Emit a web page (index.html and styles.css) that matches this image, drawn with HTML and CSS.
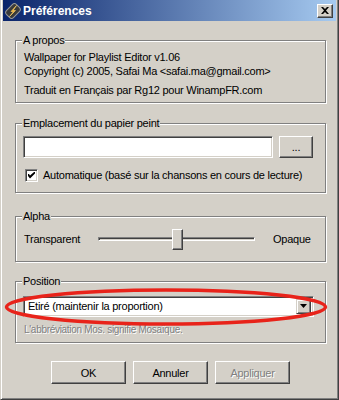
FILE: index.html
```html
<!DOCTYPE html>
<html lang="fr">
<head>
  <meta charset="UTF-8" />
  <title>Préférences</title>
  <link rel="stylesheet" href="styles.css">
</head>
<body>
  <div class="window">
    <div class="titlebar">
      <svg class="app-icon" width="16" height="16" viewBox="0 0 16 16">
        <rect x="3" y="1" width="10" height="14" rx="3" transform="rotate(45 8 8)" fill="#3a3a3a" stroke="#9a9a9a" stroke-width="1"/>
        <path d="M11.5 2.5 L6 8.5 L8.5 8.5 L4.5 13.5 L10.5 7.5 L8 7.5 Z" fill="#f7a21b" stroke="#ffd870" stroke-width="0.6"/>
      </svg>
      <span class="title">Préférences</span>
      <button class="close-btn">
        <svg width="8" height="7" viewBox="0 0 8 7"><path d="M0 0h2l2 2 2-2h2L5 3.5 8 7H6L4 5 2 7H0l3-3.5z" fill="#000"/></svg>
      </button>
    </div>

    <div class="content">
      <fieldset class="group group-about">
        <legend>A propos</legend>
        <p>Wallpaper for Playlist Editor v1.06<br>Copyright (c) 2005, Safai Ma &lt;safai.ma@gmail.com&gt;</p>
        <p class="credit">Traduit en Français par Rg12 pour WinampFR.com</p>
      </fieldset>

      <fieldset class="group group-path">
        <legend>Emplacement du papier peint</legend>
        <div class="path-row">
          <input type="text" class="field" value="">
          <button class="btn btn-browse">...</button>
        </div>
        <label class="check-row">
          <span class="checkbox">
            <svg width="7" height="7" viewBox="0 0 7 7"><path d="M0 2h1l1 1.5L6 0h1v1.5L2 6.5 0 4z" fill="#000"/></svg>
          </span>
          Automatique (basé sur la chansons en cours de lecture)
        </label>
      </fieldset>

      <fieldset class="group group-alpha">
        <legend>Alpha</legend>
        <div class="slider-row">
          <span class="slider-label">Transparent</span>
          <div class="slider">
            <div class="track"></div>
            <div class="thumb"></div>
          </div>
          <span class="slider-end">Opaque</span>
        </div>
      </fieldset>

      <fieldset class="group group-position">
        <legend>Position</legend>
        <div class="select">
          <span class="select-text">Etiré (maintenir la proportion)</span>
          <span class="select-arrow">
            <svg width="7" height="4" viewBox="0 0 7 4"><path d="M0 0h7L3.5 4z" fill="#000"/></svg>
          </span>
        </div>
        <p class="hint">L'abbréviation Mos. signifie Mosaïque.</p>
      </fieldset>

      <div class="dialog-buttons">
        <button class="btn">OK</button>
        <button class="btn">Annuler</button>
        <button class="btn btn-disabled">Appliquer</button>
      </div>
    </div>

    <!-- annotation drawn over the screenshot -->
    <svg class="highlight" width="339" height="50" viewBox="0 0 339 50">
      <ellipse cx="165" cy="27" rx="159.5" ry="17" fill="none" stroke="#e8231a" stroke-width="3.5"/>
    </svg>
  </div>
</body>
</html>
```

FILE: styles.css
```css
* {
  margin: 0;
  padding: 0;
  box-sizing: border-box;
}

body {
  background-color: #d4d0c8;
  font-family: "Liberation Sans", Arial, sans-serif;
  font-size: 11px;
  letter-spacing: -0.25px;
  color: #000;
}

.window {
  position: relative;
  width: 339px;
  height: 400px;
  background-color: #d4d0c8;
  border-left: 1px solid #d4d0c8;
  border-right: 1px solid #404040;
  border-bottom: 1px solid #404040;
  box-shadow: inset 1px 0 0 #fff, inset -1px -1px 0 #808080;
  padding: 0 2px 2px 2px;
}

.titlebar {
  display: flex;
  align-items: center;
  height: 21px;
  padding: 0 3px 0 2px;
  background: linear-gradient(to right, #0a246a, #a6caf0);
}

.app-icon {
  flex-shrink: 0;
}

.title {
  margin-left: 2px;
  flex: 1;
  color: #fff;
  font-weight: bold;
  font-size: 12px;
  letter-spacing: 0;
}

.close-btn {
  width: 16px;
  height: 14px;
  display: flex;
  align-items: center;
  justify-content: center;
  background-color: #d4d0c8;
  border: 1px solid;
  border-color: #fff #404040 #404040 #fff;
  box-shadow: inset -1px -1px 0 #808080;
}

.content {
  padding: 13px 10px 0 12px;
}

.group {
  border: 1px solid #808080;
  box-shadow: 1px 1px 0 #fff, inset 1px 1px 0 #fff;
  padding: 0 12px 0 7px;
  min-width: 0;
}

.group legend {
  padding: 0 1px;
  margin-left: -1px;
  line-height: 13px;
  background-color: #d4d0c8;
}

.group p {
  padding-left: 1px;
  line-height: 13.5px;
}

.group-about {
  padding-top: 4px;
  padding-bottom: 4px;
}

.group-about .credit {
  margin-top: 6px;
}

.group-path {
  margin-top: 14px;
  padding-top: 6px;
  padding-bottom: 10px;
}

.path-row {
  display: flex;
  gap: 6px;
}

.field {
  flex: 1;
  height: 22px;
  background-color: #fff;
  border: 1px solid;
  border-color: #808080 #fff #fff #808080;
  box-shadow: inset 1px 1px 0 #404040, inset -1px -1px 0 #d4d0c8;
  font: inherit;
  outline: none;
}

.btn {
  height: 23px;
  width: 75px;
  background-color: #d4d0c8;
  border: 1px solid;
  border-color: #fff #404040 #404040 #fff;
  box-shadow: inset -1px -1px 0 #808080, inset 1px 1px 0 #d4d0c8;
  font: inherit;
  letter-spacing: inherit;
  color: #000;
}

.btn-browse {
  width: 34px;
  height: 22px;
}

.btn-disabled {
  color: #808080;
  text-shadow: 1px 1px 0 #fff;
}

.check-row {
  display: flex;
  align-items: center;
  gap: 5px;
  margin-top: 11px;
  padding-left: 2px;
  white-space: nowrap;
}

.checkbox {
  width: 13px;
  height: 13px;
  flex-shrink: 0;
  display: flex;
  align-items: center;
  justify-content: center;
  background-color: #fff;
  border: 1px solid;
  border-color: #808080 #fff #fff #808080;
  box-shadow: inset 1px 1px 0 #404040, inset -1px -1px 0 #d4d0c8;
}

.group-alpha {
  margin-top: 17px;
  padding-top: 6px;
  padding-bottom: 11px;
}

.slider-row {
  display: flex;
  align-items: center;
  height: 21px;
}

.slider-label {
  width: 75px;
  padding-left: 1px;
}

.slider {
  position: relative;
  width: 157px;
  height: 21px;
  display: flex;
  align-items: center;
}

.track {
  width: 100%;
  height: 4px;
  border: 1px solid;
  border-color: #808080 #fff #fff #808080;
  box-shadow: inset 1px 1px 0 #404040;
}

.thumb {
  position: absolute;
  left: 74px;
  top: 0;
  width: 11px;
  height: 21px;
  background-color: #d4d0c8;
  border: 1px solid;
  border-color: #fff #404040 #404040 #fff;
  box-shadow: inset -1px -1px 0 #808080;
}

.slider-end {
  margin-left: 18px;
}

.group-position {
  margin-top: 13px;
  padding-top: 8px;
  padding-bottom: 6px;
  padding-right: 11px;
}

.select {
  display: flex;
  align-items: center;
  height: 21px;
  background-color: #fff;
  border: 1px solid;
  border-color: #808080 #fff #fff #808080;
  box-shadow: inset 1px 1px 0 #404040, inset -1px -1px 0 #d4d0c8;
  padding: 2px;
}

.select-text {
  flex: 1;
  padding-left: 2px;
}

.select-arrow {
  width: 15px;
  height: 15px;
  display: flex;
  align-items: center;
  justify-content: center;
  background-color: #d4d0c8;
  border: 1px solid;
  border-color: #d4d0c8 #404040 #404040 #d4d0c8;
  box-shadow: inset 1px 1px 0 #fff, inset -1px -1px 0 #808080;
}

.group .hint {
  margin-top: 6px;
  font-size: 10px;
  letter-spacing: -0.3px;
  color: #808080;
  text-shadow: 1px 1px 0 #fff;
}

.dialog-buttons {
  display: flex;
  justify-content: center;
  gap: 7px;
  margin-top: 18px;
}

.highlight {
  position: absolute;
  left: 0;
  top: 280px;
  pointer-events: none;
}
```
